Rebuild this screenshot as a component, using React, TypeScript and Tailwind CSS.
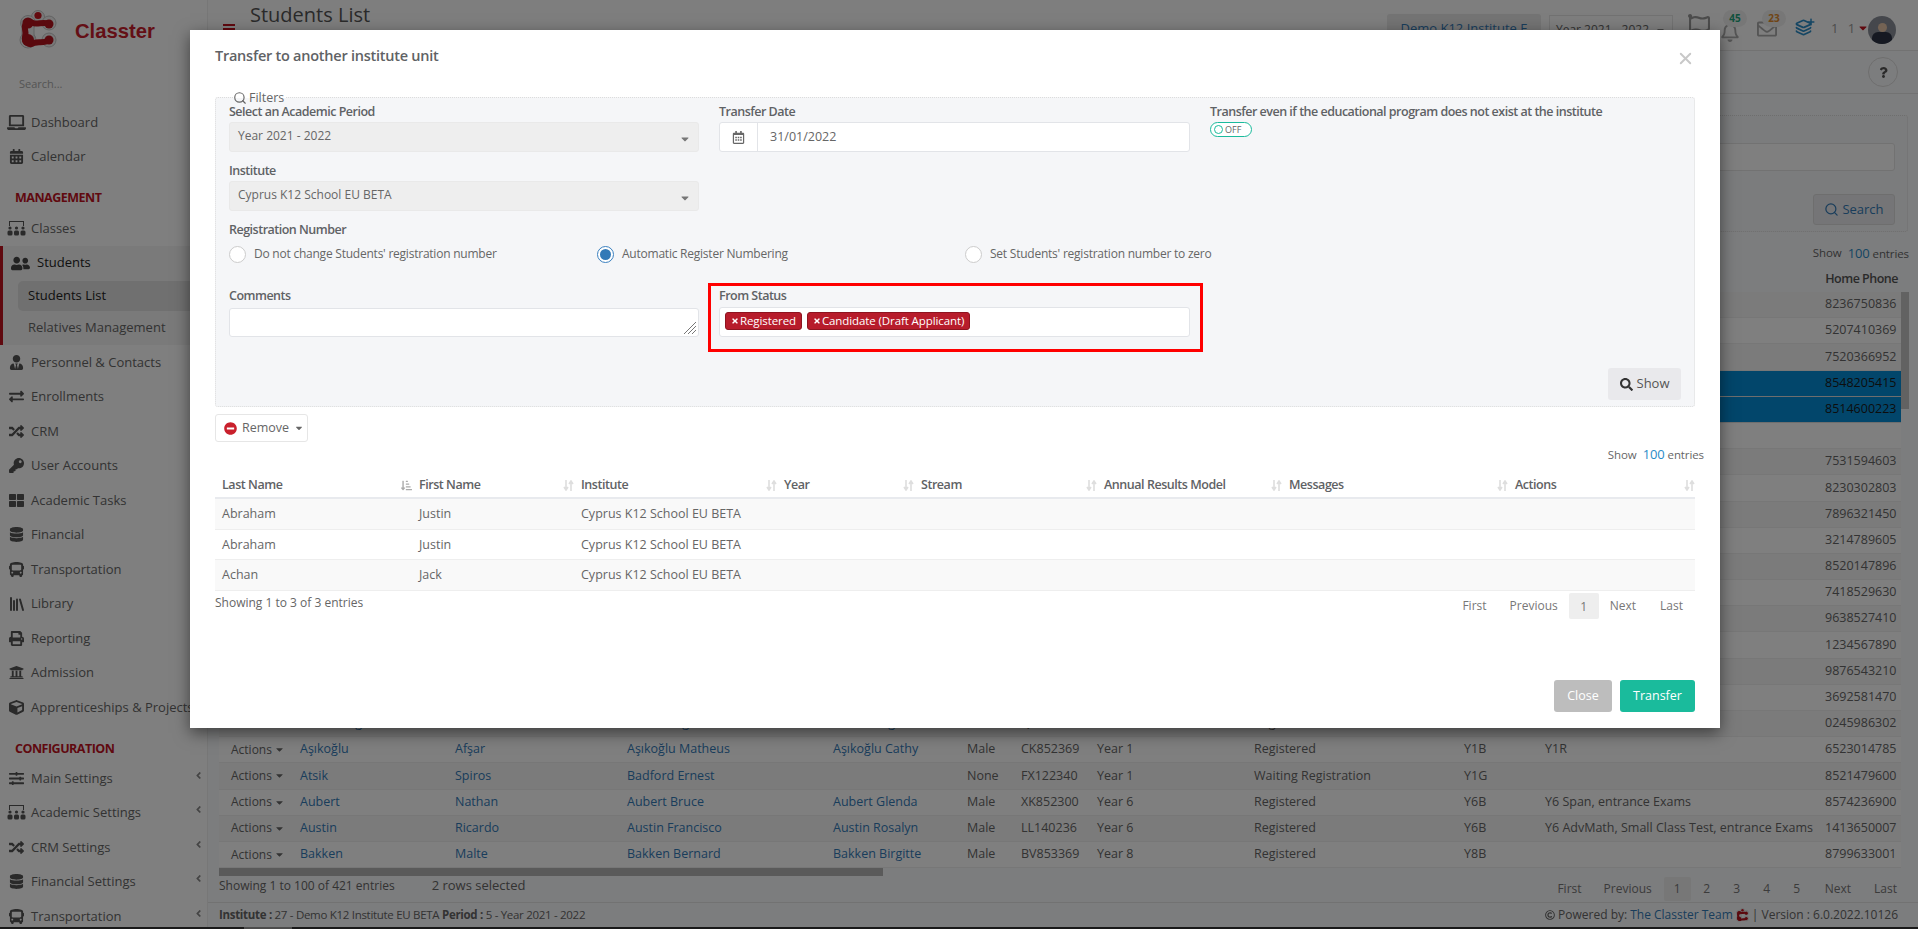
import type { ReactNode } from "react";
import {
  FaAngleLeft,
  FaBus,
  FaCalendarAlt,
  FaCaretDown,
  FaCube,
  FaDatabase,
  FaExchangeAlt,
  FaKey,
  FaLaptop,
  FaMinusCircle,
  FaPrint,
  FaRandom,
  FaRegBell,
  FaRegCalendarAlt,
  FaRegEnvelope,
  FaRegFlag,
  FaSearch,
  FaSlidersH,
  FaThLarge,
  FaTimes,
  FaUniversity,
  FaUserTie,
  FaUserFriends,
  FaQuestion,
  FaPlus,
  FaSortAmountDownAlt,
  FaRegCopyright,
} from "react-icons/fa";
import { Layers, Library, Search, X } from "lucide-react";

function ClassesIcon() {
  return (
    <svg width="19" height="15" viewBox="0 0 19 15" fill="currentColor">
      <path d="M2 0h15v5h-1V1H3v4H2z" />
      <circle cx="3" cy="7" r="1.6" />
      <circle cx="9.5" cy="7" r="1.6" />
      <circle cx="16" cy="7" r="1.6" />
      <rect x="0.5" y="9.5" width="5" height="5" rx="1.5" />
      <rect x="7" y="9.5" width="5" height="5" rx="1.5" />
      <rect x="13.5" y="9.5" width="5" height="5" rx="1.5" />
    </svg>
  );
}

function Logo({ size = 38 }: { size?: number }) {
  return (
    <svg width={size} height={(size * 42) / 38} viewBox="0 0 38 42">
      <g fill="#f1f1f1" stroke="#c4c4c4" strokeWidth="1">
        <circle cx="19" cy="8" r="6.5" />
        <circle cx="9" cy="14" r="7.5" />
        <circle cx="30" cy="14" r="7" />
        <circle cx="9" cy="31" r="8" />
        <circle cx="30" cy="31" r="7" />
        <rect x="3" y="12" width="12" height="18" />
      </g>
      <circle cx="19" cy="6.5" r="3.6" fill="#c9141f" />
      <path
        d="M30 15 C25 12 18 16 14 14 C9 11 5 15 6 20 C7 24 7 25 6 28 C5 33 10 37 15 34 C19 32 25 35 30 31"
        fill="none"
        stroke="#b5121c"
        strokeWidth="6"
        strokeLinecap="round"
      />
      <g fill="#b5121c">
        <circle cx="9" cy="14" r="5.5" />
        <circle cx="9" cy="31" r="6" />
        <circle cx="30" cy="15" r="4.5" />
        <circle cx="30" cy="31" r="4.5" />
      </g>
    </svg>
  );
}

function SortIcon() {
  return (
    <svg width="11" height="11" viewBox="0 0 11 11" fill="none" stroke="#dedede" strokeWidth="1.6">
      <path d="M3 0v9M1 7l2 3 2-3" />
      <path d="M8 11V2M6 4l2-3 2 3" />
    </svg>
  );
}

type NavItem = { label: string; icon: ReactNode; arrow?: boolean };

const topNav: NavItem[] = [
  { label: "Dashboard", icon: <FaLaptop size={19} /> },
  { label: "Calendar", icon: <FaCalendarAlt size={15} /> },
];

const mgmtNav: NavItem[] = [
  { label: "Personnel & Contacts", icon: <FaUserTie size={15} /> },
  { label: "Enrollments", icon: <FaExchangeAlt size={15} /> },
  { label: "CRM", icon: <FaRandom size={15} /> },
  { label: "User Accounts", icon: <FaKey size={15} /> },
  { label: "Academic Tasks", icon: <FaThLarge size={15} /> },
  { label: "Financial", icon: <FaDatabase size={15} /> },
  { label: "Transportation", icon: <FaBus size={15} /> },
  { label: "Library", icon: <Library size={18} strokeWidth={2.6} /> },
  { label: "Reporting", icon: <FaPrint size={15} /> },
  { label: "Admission", icon: <FaUniversity size={15} /> },
  { label: "Apprenticeships & Projects", icon: <FaCube size={15} /> },
];

const configNav: NavItem[] = [
  { label: "Main Settings", icon: <FaSlidersH size={15} />, arrow: true },
  { label: "Academic Settings", icon: <ClassesIcon />, arrow: true },
  { label: "CRM Settings", icon: <FaRandom size={15} />, arrow: true },
  { label: "Financial Settings", icon: <FaDatabase size={15} />, arrow: true },
  { label: "Transportation", icon: <FaBus size={15} />, arrow: true },
];

function NavRow({ item }: { item: NavItem }) {
  return (
    <div className="flex h-[34.5px] shrink-0 items-center whitespace-nowrap pl-[7px] text-[#666]">
      <span className="flex w-[24px] shrink-0 justify-center pr-[5px] text-[#555]">{item.icon}</span>
      <span>{item.label}</span>
      {item.arrow && (
        <span className="ml-auto mb-[6px] mr-[3px] text-[#888]">
          <FaAngleLeft size={11} />
        </span>
      )}
    </div>
  );
}

function Sidebar() {
  return (
    <aside className="flex h-full w-[208px] shrink-0 flex-col overflow-hidden border-r border-[#eee] bg-white">
      <div className="flex h-[64px] shrink-0 items-start pl-[19px] pt-[9px]">
        <Logo />
        <span className="ml-[18px] mt-[10px] font-['Liberation_Sans',sans-serif] text-[20.25px] font-bold leading-[24px] text-[#c81e2d]">
          Classter
        </span>
      </div>
      <div className="flex h-[41px] shrink-0 items-start pl-[19px] pt-[11px] text-[11px] leading-[18px] text-[#aaa]">
        Search...
      </div>
      {topNav.map((item) => (
        <NavRow key={item.label} item={item} />
      ))}
      <div className="flex h-[37px] shrink-0 items-center pl-[15px] pt-[12px] text-[12.5px] font-bold tracking-[-0.5px] text-[#c1121f]">
        MANAGEMENT
      </div>
      <NavRow item={{ label: "Classes", icon: <ClassesIcon /> }} />
      <div className="flex h-[99.5px] shrink-0 flex-col border-l-[3px] border-[#c1121f] bg-[#f4f4f4]">
        <div className="flex h-[35px] items-center pl-[8px] text-[#222]">
          <span className="flex w-[24px] justify-start text-[#444]">
            <FaUserFriends size={19} />
          </span>
          <span className="ml-[2px]">Students</span>
        </div>
        <div className="ml-[15px] flex h-[30px] items-center rounded-l-[5px] bg-[#e0e0e0] pl-[10px] text-[#222]">
          Students List
        </div>
        <div className="flex h-[34.5px] items-center pl-[25px] text-[#666]">Relatives Management</div>
      </div>
      {mgmtNav.map((item) => (
        <NavRow key={item.label} item={item} />
      ))}
      <div className="flex h-[36.5px] shrink-0 items-center pl-[15px] pt-[13px] text-[12.5px] font-bold tracking-[-0.5px] text-[#c1121f]">
        CONFIGURATION
      </div>
      {configNav.map((item) => (
        <NavRow key={item.label} item={item} />
      ))}
    </aside>
  );
}

type Row = string[];

const phones = [
  "8236750836",
  "5207410369",
  "7520366952",
  "8548205415",
  "8514600223",
  "",
  "7531594603",
  "8230302803",
  "7896321450",
  "3214789605",
  "8520147896",
  "7418529630",
  "9638527410",
  "1234567890",
  "9876543210",
  "3692581470",
];

const bottomRows: Row[] = [
  ["Armstrong", "Maria", "Armstrong Marcus", "Armstrong Amanda", "Female", "QT852301", "Year 1", "Registered", "Y1E", "", "0245986302"],
  ["Aşıkoğlu", "Afşar", "Aşıkoğlu Matheus", "Aşıkoğlu Cathy", "Male", "CK852369", "Year 1", "Registered", "Y1B", "Y1R", "6523014785"],
  ["Atsik", "Spiros", "Badford Ernest", "", "None", "FX122340", "Year 1", "Waiting Registration", "Y1G", "", "8521479600"],
  ["Aubert", "Nathan", "Aubert Bruce", "Aubert Glenda", "Male", "XK852300", "Year 6", "Registered", "Y6B", "Y6 Span, entrance Exams", "8574236900"],
  ["Austin", "Ricardo", "Austin Francisco", "Austin Rosalyn", "Male", "LL140236", "Year 6", "Registered", "Y6B", "Y6 AdvMath, Small Class Test, entrance Exams", "1413650007"],
  ["Bakken", "Malte", "Bakken Bernard", "Bakken Birgitte", "Male", "BV853369", "Year 8", "Registered", "Y8B", "", "8799633001"],
];

const rowGrid =
  "grid grid-cols-[69px_155px_172px_206px_134px_54px_76px_157px_210px_81px_280px_76px]";

function StudentRow({ cells, index }: { cells: Row; index: number }) {
  const selected = index === 3 || index === 4;
  return (
    <div
      className={`${rowGrid} h-[26.2px] shrink-0 items-center whitespace-nowrap border-b pl-[12px] text-[12.5px] ${
        selected ? "border-[#ddd] bg-[#058cd6]" : index % 2 ? "border-[#eee] bg-white" : "border-[#eee] bg-[#f7f7f7]"
      }`}
    >
      <span className="flex items-center text-[12px] text-[#666]">
        {cells[0] && (
          <>
            Actions
            <FaCaretDown size={11} className="ml-[2px]" />
          </>
        )}
      </span>
      <span className="text-[#337ab7]">{cells[0]}</span>
      <span className="text-[#337ab7]">{cells[1]}</span>
      <span className="text-[#337ab7]">{cells[2]}</span>
      <span className="text-[#337ab7]">{cells[3]}</span>
      {cells.slice(4).map((c, i) => (
        <span key={i} className={selected ? "text-[#1a1a1a]" : "text-[#666]"}>
          {c}
        </span>
      ))}
    </div>
  );
}

function Background() {
  const rows: Row[] = phones.map((p) => ["", "", "", "", "", "", "", "", "", "", p]);
  const all = [...rows, ...bottomRows];
  return (
    <main className="flex h-full min-w-0 flex-1 flex-col overflow-hidden bg-[#f9fafc] text-[#666]">
      <div className="flex h-[51px] shrink-0 items-start border-b border-[#e4e4e4] bg-[#fdfdfd]">
        <div className="ml-[15px] mt-[24px] flex w-[12px] flex-col gap-[2px]">
          <span className="h-[2px] bg-[#c1121f]" />
          <span className="h-[2px] bg-[#c1121f]" />
          <span className="h-[2px] bg-[#c1121f]" />
        </div>
        <span className="ml-[15px] mt-[2px] w-[1137px] text-[20px] leading-[26px] text-[#555]">Students List</span>
        <div className="mt-[14px] flex h-[30px] w-[154px] items-center justify-center rounded-[3px] bg-[#e8e8e8] text-[#337ab7]">
          Demo K12 Institute E
        </div>
        <div className="ml-[8px] mt-[15px] flex h-[30px] w-[124px] items-center justify-center gap-[6px] border border-[#e4e4e4] text-[12px]">
          Year 2021 - 2022 <FaCaretDown size={11} />
        </div>
        <span className="ml-[15px] mt-[14px] text-[#999]">
          <FaRegFlag size={22} />
        </span>
        <div className="relative ml-[10px] mt-[14px] h-[24px] w-[24px] text-[#aaa]">
          <FaRegBell size={20} className="absolute left-[0px] top-[8px]" />
          <span className="absolute left-[3px] top-[-4px] flex h-[17px] w-[24px] items-center justify-center rounded-full bg-[#eee] text-[10px] font-bold text-[#1fa37a]">
            45
          </span>
        </div>
        <div className="relative ml-[13px] mt-[14px] h-[24px] w-[24px] text-[#aaa]">
          <FaRegEnvelope size={20} className="absolute left-[0px] top-[5px]" />
          <span className="absolute left-[5px] top-[-4px] flex h-[17px] w-[24px] items-center justify-center rounded-full bg-[#eee] text-[10px] font-bold text-[#e08a2c]">
            23
          </span>
        </div>
        <div className="relative ml-[14px] mt-[18px] h-[18px] w-[20px] text-[#2a8cc7]">
          <Layers size={17} strokeWidth={2.4} className="absolute bottom-0 left-0" />
          <FaPlus size={8} className="absolute right-0 top-0" />
        </div>
        <span className="ml-[16px] mt-[18px] w-[20px] whitespace-nowrap text-[13px] leading-[20px] tracking-[3px] text-[#999]">
          1 1
        </span>
        <FaCaretDown size={12} className="ml-[6px] mt-[22px] text-[#c1121f]" />
        <div className="-ml-[1px] mt-[16px] flex h-[28px] w-[28px] items-end justify-center overflow-hidden rounded-full bg-[#8a8f99]">
          <div className="flex flex-col items-center">
            <span className="h-[9px] w-[9px] rounded-full bg-[#e9c6a8]" />
            <span className="h-[12px] w-[20px] rounded-t-[6px] bg-[#2c3344]" />
          </div>
        </div>
      </div>

      <div className="flex h-[43px] shrink-0 items-center justify-end border-b border-[#e4e4e4] pr-[20px]">
        <span className="flex h-[30px] w-[30px] items-center justify-center rounded-full border border-[#ddd] text-[#555]">
          <FaQuestion size={11} />
        </span>
      </div>

      <div className="ml-[11px] mr-[10px] mt-[21px] flex h-[117px] shrink-0 flex-col items-end rounded-[3px] border border-dotted border-[#ddd] bg-[#f7f8fa] pr-[12px] pt-[27px]">
        <div className="h-[28px] w-full rounded-[3px] border border-[#e4e4e4] bg-white" />
        <button className="mt-[23px] flex h-[31px] w-[82px] items-center justify-center gap-[3px] rounded-[3px] border border-[#ddd] bg-[#eaebee] text-[#337ab7]">
          <Search size={15} /> Search
        </button>
      </div>

      <div className="flex h-[35px] shrink-0 justify-end gap-[6px] pr-[9px] pt-[12px] text-[11.5px] leading-[18px] tracking-[-0.1px]">
        <span>Show</span>
        <span>
          <span className="text-[13px] text-[#2a8cc7]">100</span> entries
        </span>
      </div>

      <div className="flex h-[25px] shrink-0 items-center justify-end pr-[20px] text-[12.5px] font-semibold tracking-[-0.5px] text-[#555]">
        Home Phone
      </div>

      <div className="flex shrink-0 pl-[11px]">
        <div className="flex w-[1682px] flex-col">
          {all.map((cells, i) => (
            <StudentRow key={i} cells={cells} index={i} />
          ))}
        </div>
        <div className="w-[8px]">
          <div className="h-[117px] w-[8px] bg-[#c4c4c4]" />
        </div>
      </div>
      <div className="ml-[11px] h-[8px] w-[664px] shrink-0 bg-[#b5b5b5]" />

      <div className="flex h-[26px] shrink-0 items-center pl-[11px] pr-[21px] text-[12px]">
        <span className="mb-[6px]">Showing 1 to 100 of 421 entries</span>
        <span className="mb-[6px] ml-[37px] text-[13px]">2 rows selected</span>
        <div className="ml-auto flex items-center text-[#777]">
          <span className="mr-[22px]">First</span>
          <span className="mr-[12px]">Previous</span>
          <span className="mr-[1px] flex h-[24px] w-[27px] items-center justify-center rounded-[2px] bg-[#eee]">1</span>
          <span className="w-[30px] text-center">2</span>
          <span className="w-[30px] text-center">3</span>
          <span className="w-[30px] text-center">4</span>
          <span className="w-[30px] text-center">5</span>
          <span className="ml-[13px] mr-[23px]">Next</span>
          <span>Last</span>
        </div>
      </div>

      <div className="flex min-h-0 flex-1 items-center justify-between border-t border-[#e4e4e4] pl-[11px] pr-[20px] text-[11.5px]">
        <span className="tracking-[-0.3px]">
          <b>Institute :</b> 27 - Demo K12 Institute EU BETA <b>Period :</b> 5 - Year 2021 - 2022
        </span>
        <span className="flex items-center gap-[3px] text-[12px]">
          <FaRegCopyright size={10} />
          Powered by: <span className="text-[#337ab7]">The Classter Team</span>
          <Logo size={13} />| Version : 6.0.2022.10126
        </span>
      </div>
    </main>
  );
}

function FieldLabel({ children }: { children: ReactNode }) {
  return (
    <div className="h-[17px] whitespace-nowrap text-[12.5px] font-semibold leading-[17px] tracking-[-0.5px] text-[#5f6265]">
      {children}
    </div>
  );
}

function SelectBox({ value }: { value: string }) {
  return (
    <div className="flex h-[30px] items-center justify-between rounded-[3px] border border-[#e9e9e9] bg-[#eeeeee] pl-[8px] pr-[7px] text-[12px] text-[#666]">
      <span className="pb-[2px]">{value}</span>
      <FaCaretDown size={12} className="mt-[3px] text-[#777]" />
    </div>
  );
}

function Radio({ label, checked }: { label: string; checked?: boolean }) {
  return (
    <label className="flex h-[20px] items-center gap-[8px] text-[12px] tracking-[-0.23px] text-[#666]">
      {checked ? (
        <span className="flex h-[17px] w-[17px] items-center justify-center rounded-full border border-[#3a80bf] bg-white">
          <span className="h-[11px] w-[11px] rounded-full bg-[#337ab7]" />
        </span>
      ) : (
        <span className="h-[17px] w-[17px] rounded-full border border-[#ccc] bg-white" />
      )}
      {label}
    </label>
  );
}

function Chip({ label }: { label: string }) {
  return (
    <span className="flex h-[18px] items-center gap-[1px] rounded-[3px] border border-[#8e1420] bg-[#b71c2b] px-[5px] text-[11.5px] tracking-[-0.1px] text-white">
      <FaTimes size={8} />
      {label}
    </span>
  );
}

const transferCols = [
  "Last Name",
  "First Name",
  "Institute",
  "Year",
  "Stream",
  "Annual Results Model",
  "Messages",
  "Actions",
];

const transferRows = [
  ["Abraham", "Justin", "Cyprus K12 School EU BETA"],
  ["Abraham", "Justin", "Cyprus K12 School EU BETA"],
  ["Achan", "Jack", "Cyprus K12 School EU BETA"],
];

const transferGrid = "grid grid-cols-[197px_162px_203px_137px_183px_185px_226px_187px]";

function TransferModal() {
  return (
    <div className="absolute left-[190px] top-[30px] flex h-[698px] w-[1530px] flex-col bg-white px-[25px] text-[#666] shadow-[0_5px_15px_rgba(0,0,0,0.5)]">
      <div className="mb-[15px] flex h-[52px] shrink-0 items-center justify-between">
        <h4 className="text-[14.5px] font-semibold tracking-[-0.25px] text-[#5f6265]">
          Transfer to another institute unit
        </h4>
        <X size={19} strokeWidth={2.4} className="mr-0 mt-[5px] text-[#c8c8c8]" />
      </div>

      <div className="relative flex h-[310px] shrink-0 flex-col rounded-[3px] border border-dotted border-[#dcdcdc] bg-[#f5f6f8] px-[13px] pb-[6px]">
        <div className="absolute left-[17px] top-[-9px] flex h-[18px] items-center gap-[2px] bg-linear-to-b from-white from-50% to-[#f5f6f8] to-50% pr-[2px] text-[12.5px] text-[#666]">
          <Search size={14} />
          Filters
        </div>

        <div className="grid grid-cols-[470px_471px_1fr] gap-x-[20px] pt-[5px]">
          <div>
            <FieldLabel>Select an Academic Period</FieldLabel>
            <div className="mt-[2px]">
              <SelectBox value="Year 2021 - 2022" />
            </div>
          </div>
          <div>
            <FieldLabel>Transfer Date</FieldLabel>
            <div className="mt-[2px] flex h-[30px] items-center rounded-[3px] border border-[#e2e4e8] bg-white">
              <span className="flex h-full w-[38px] items-center justify-center border-r border-[#e2e4e8] text-[#666]">
                <FaRegCalendarAlt size={13} />
              </span>
              <span className="pl-[12px] pt-[1px] text-[12.5px]">31/01/2022</span>
            </div>
          </div>
          <div>
            <FieldLabel>Transfer even if the educational program does not exist at the institute</FieldLabel>
            <div className="mt-[2px] flex h-[15px] w-[42px] items-center gap-[2px] rounded-full border border-[#1abb9c] bg-white pl-[3px] text-[9px] text-[#666]">
              <span className="h-[9px] w-[9px] rounded-full border border-[#1abb9c]" />
              OFF
            </div>
          </div>
        </div>

        <div className="mt-[10px] w-[470px]">
          <FieldLabel>Institute</FieldLabel>
          <div className="mt-[2px]">
            <SelectBox value="Cyprus K12 School EU BETA" />
          </div>
        </div>

        <div className="mt-[10px]">
          <FieldLabel>Registration Number</FieldLabel>
          <div className="mt-[6px] grid w-[1104px] grid-cols-3">
            <Radio label="Do not change Students' registration number" />
            <Radio label="Automatic Register Numbering" checked />
            <Radio label="Set Students' registration number to zero" />
          </div>
        </div>

        <div className="mt-[23px] grid grid-cols-[470px_471px] gap-x-[20px]">
          <div>
            <FieldLabel>Comments</FieldLabel>
            <div className="relative mt-[4px] h-[29px] rounded-[3px] border border-[#e2e4e8] bg-white">
              <svg className="absolute bottom-[1px] right-[1px]" width="14" height="14" viewBox="0 0 14 14" stroke="#777" strokeWidth="1">
                <path d="M1 13 13 1M5 13l8-8M9 13l4-4" />
              </svg>
            </div>
          </div>
          <div className="relative">
            <FieldLabel>From Status</FieldLabel>
            <div className="mt-[3px] flex h-[30px] items-start gap-[5px] rounded-[3px] border border-[#e2e4e8] bg-white pl-[5px] pt-[4px]">
              <Chip label="Registered" />
              <Chip label="Candidate (Draft Applicant)" />
            </div>
            <div className="absolute -bottom-[15px] -left-[11px] -right-[13px] -top-[4px] border-[3px] border-[#f00]" />
          </div>
        </div>

        <button className="ml-auto mr-0 mt-auto flex h-[32px] w-[73px] items-center justify-center gap-[4px] rounded-[3px] bg-[#e9e9ec] text-[#555]">
          <FaSearch size={13} className="text-[#333]" />
          Show
        </button>
      </div>

      <button className="mt-[7px] flex h-[28px] w-[93px] shrink-0 items-center gap-[5px] rounded-[3px] border border-[#e6e6e6] bg-white pl-[8px] text-[12.5px] text-[#666]">
        <FaMinusCircle size={13} className="text-[#c9202c]" />
        Remove
        <FaCaretDown size={10} />
      </button>

      <div className="-mr-[9px] flex h-[26px] shrink-0 items-center justify-end gap-[6px] text-[11.5px] tracking-[-0.1px]">
        <span>Show</span>
        <span>
          <span className="text-[13px] text-[#2a8cc7]">100</span> entries
        </span>
      </div>

      <div className={`${transferGrid} h-[31px] shrink-0 items-center border-b-2 border-[#e8eaee] pt-[6px]`}>
        {transferCols.map((col, i) => (
          <div key={col} className="flex items-center justify-between pl-[7px] pr-0">
            <span className="text-[12.5px] font-semibold tracking-[-0.45px] text-[#5f6265]">{col}</span>
            {i === 0 ? <FaSortAmountDownAlt size={11} className="text-[#aaa]" /> : <SortIcon />}
          </div>
        ))}
      </div>

      {transferRows.map((row, i) => (
        <div
          key={i}
          className={`${transferGrid} h-[30.7px] shrink-0 items-center border-b border-[#eee] pt-[1px] text-[12.5px] ${
            i % 2 === 0 ? "bg-[#f9f9f9]" : "bg-white"
          }`}
        >
          {row.map((cell, j) => (
            <span key={j} className="whitespace-nowrap pl-[7px] text-[#666]">
              {cell}
            </span>
          ))}
        </div>
      ))}

      <div className="flex shrink-0 items-start justify-between pt-[2px] text-[12px]">
        <span className="mt-[1px] leading-[18px]">Showing 1 to 3 of 3 entries</span>
        <div className="mr-[12px] flex items-center text-[#777]">
          <span className="mr-[23px]">First</span>
          <span className="mr-[11px]">Previous</span>
          <span className="mr-[11px] flex h-[26px] w-[30px] items-center justify-center rounded-[2px] bg-[#eeeeee] pt-[1px]">
            1
          </span>
          <span className="mr-[24px]">Next</span>
          <span>Last</span>
        </div>
      </div>

      <div className="mb-[16px] mt-auto flex shrink-0 justify-end gap-[8px] text-[12.5px]">
        <button className="h-[32px] w-[58px] rounded-[3px] bg-[#bdbdbd] text-white">Close</button>
        <button className="h-[32px] w-[75px] rounded-[3px] bg-[#1abb9c] text-white">Transfer</button>
      </div>
    </div>
  );
}

export default function App() {
  return (
    <div className="relative flex h-[929px] w-[1918px] flex-col overflow-hidden font-['Open_Sans',sans-serif] text-[13px]">
      <div className="flex min-h-0 flex-1">
        <Sidebar />
        <Background />
      </div>
      <div className="flex h-[2px] shrink-0 bg-[#333]">
        <span className="ml-[244px] w-[48px] bg-[#999]" />
      </div>
      <div className="absolute inset-0 bg-black/50" />
      <TransferModal />
    </div>
  );
}
